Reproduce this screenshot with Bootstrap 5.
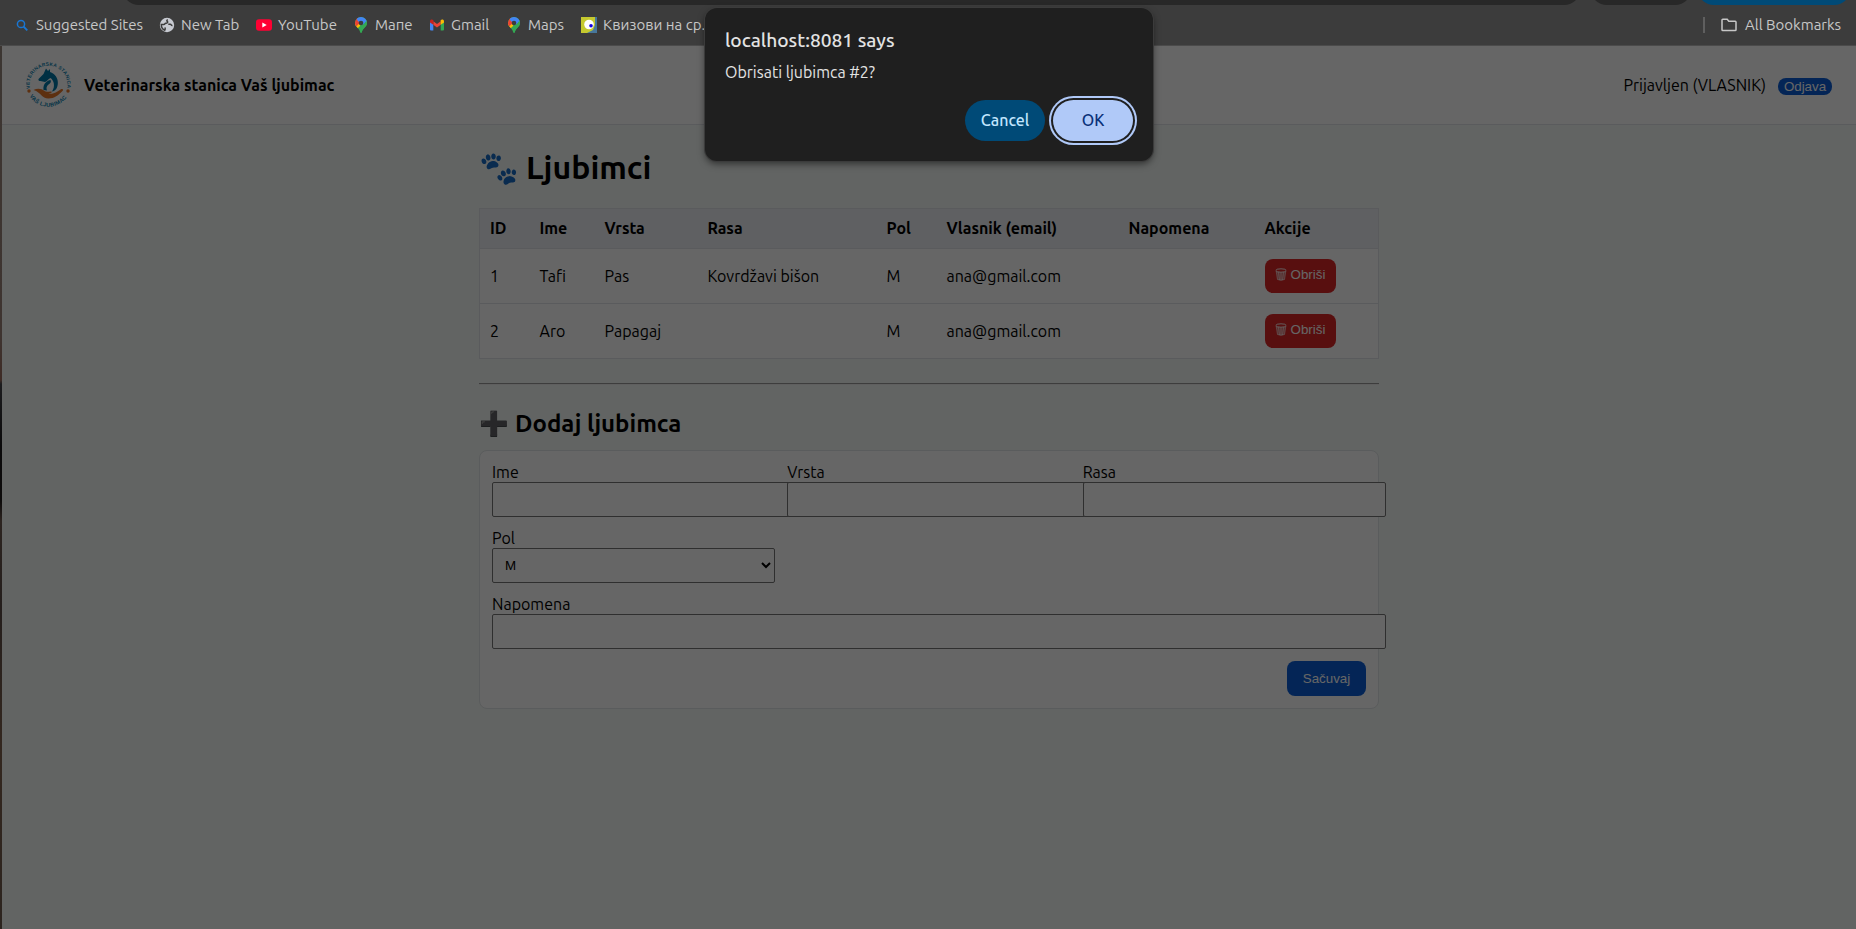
<!DOCTYPE html>
<html lang="sr">
<head>
<meta charset="utf-8">
<title>Veterinarska stanica Vaš ljubimac</title>
<link href="https://cdn.jsdelivr.net/npm/bootstrap@5.3.0/dist/css/bootstrap.min.css" rel="stylesheet">
<script src="https://cdn.jsdelivr.net/npm/bootstrap@5.3.0/dist/js/bootstrap.bundle.min.js"></script>
<style>
body{font-family:Ubuntu,"Noto Sans",sans-serif;font-size:16px;color:#000;height:929px;overflow:hidden;background:#3c3c3c}
.toolbar-strip{height:5px;background:#3c3c3c;padding-left:122px}
.pill{height:34px;border-radius:17px;background:#282828}
.pill-url{width:1459px;margin-right:9px}
.pill-ext{width:102px;margin-right:5px}
.pill-user{width:154px;background:#004a77}
.bookmarks{height:41px;background:#3c3c3c;border-bottom:1px solid #4b4b4b;padding:0 15px 0 14px;font-size:15px;color:#c7c7c7;line-height:40px}
.bookmarks svg{width:16px;height:16px;flex:none;margin-right:6px}
.bm-sep{width:2px;height:16px;background:#5f5f5f;margin-right:16px}
.desk-edge{width:2px;background:linear-gradient(#3c3632 0,#3e3430 290px,#3e2b25 334px,#1c1c1e 338px,#0b0a0b 400px,#0d0b0b 455px,#2c2420 475px,#241e1c 560px,#33271f 700px,#2c241f 100%)}
.site{background:#f5faf7}
.shade{background:rgba(0,0,0,.6)}
.site-head{height:79px;background:#fff;border-bottom:1px solid #e1e4e8;padding:0 24px}
.brand-name{font-weight:700;margin-left:12px}
.user-info{margin-right:12px}
.btn-logout{font:13.33px/17px "Liberation Sans",sans-serif;width:54px;height:17px;background:#0b5ed7;color:#fff;border:0;border-radius:8px;padding:0;margin-top:2px}
.wrap{width:900px;margin-left:477px;padding-top:18px}
.wrap h1{font-size:32px;line-height:48px;font-weight:700;margin:0 0 17px}
.wrap h2{font-size:24px;line-height:38px;font-weight:700;margin:0 0 7px}
.emo{line-height:1;flex:none}
.emo1{font-size:32px;width:47px}
.emo2{font-size:24px;width:36px}
.pets{width:900px;table-layout:fixed;border-collapse:collapse;background:#fff;border:1px solid #e1e4e8}
.pets th{background:#eef1f6;font-weight:700;height:40px;padding:0 10px 2px;border-bottom:1px solid #e1e4e8}
.pets td{height:55px;padding:0 10px;border-bottom:1px solid #e1e4e8}
.pets th,.pets td{white-space:nowrap}
.btn-del{font:13.33px/15px "Liberation Sans",sans-serif;width:71px;height:34px;background:#dc2626;color:#fff;border:0;border-radius:8px;padding:0 0 3px;display:flex;align-items:center;justify-content:center}
.btn-del svg{width:12px;height:13px;margin-right:4px;margin-bottom:1px}
.rule{height:2px;border-top:1px solid #9a9a9a;border-bottom:1px solid #eee;margin:24px 0 20px}
.form-box{background:#fff;border:1px solid #e1e5e8;border-radius:8px;padding:12px;height:259px;display:grid;grid-template-columns:repeat(3,1fr);column-gap:12px;row-gap:12px;grid-auto-rows:54px}
.form-box label{display:block;line-height:18px;height:19px;white-space:nowrap}
.form-box input{display:block;width:calc(100% + 20px);height:35px;background:#fff;border:1px solid #767676;border-radius:2px;padding:0 10px}
.form-box select{display:block;width:100%;height:35px;background:#fff;border:1px solid #767676;border-radius:2px;padding:0 8px;font:13.33px "Liberation Sans",sans-serif;color:#000}
.span-all{grid-column:1/-1}
.btn-save{font:13.33px "Liberation Sans",sans-serif;width:79px;height:35px;background:#0b5ed7;color:#fff;border:0;border-radius:8px;padding:0}
.dialog-box{left:705px;top:8px;width:448px;height:153px;background:#1f1f1f;border-radius:12px;box-shadow:0 0 0 1px #3b3b3b,0 3px 7px rgba(0,0,0,.5);padding:19px 20px 20px;color:#e3e3e3;z-index:5}
.dlg-title{font-size:19.2px;line-height:26px;font-weight:500;margin-bottom:5px}
.dlg-text{line-height:28px}
.dlg-btns{margin-top:14px;gap:8px}
.dlg-btns button{width:80px;height:41px;border:0;border-radius:21px;font-weight:500;padding:0 0 2px}
.b-cancel{background:#004a77;color:#c2e7ff}
.b-ok{background:#b0c9f8;color:#0a3078;box-shadow:0 0 0 2px #1f1f1f,0 0 0 4px #b0c9f8}
</style>
</head>
<body class="d-flex flex-column position-relative">
<div class="toolbar-strip d-flex align-items-end overflow-hidden"><div class="pill pill-url"></div><div class="pill pill-ext"></div><div class="pill pill-user"></div></div>

<svg width="0" height="0" class="position-absolute"><defs>
<clipPath id="pinc"><path d="M8 0a6 6 0 0 0-6 6c0 4 4.300 5 5.200 9.200.2 1 1.400 1 1.600 0C9.700 11 14 10 14 6a6 6 0 0 0-6-6z"/></clipPath>
<symbol id="pin" viewBox="0 0 16 16"><g clip-path="url(#pinc)"><path fill="#34a853" d="M0 0h16v16H0z"/><path fill="#fbbc04" d="M0 5h8l-1 4-4 4-3-3z"/><path fill="#ea4335" d="M0 0h5l3 5-5 4.500L0 8z"/><path fill="#4285f4" d="M4 0h12v4L9 8 4 3z"/><path fill="#34a853" d="m14 3-7 9 1 4 8-6z"/></g><circle cx="8" cy="6" r="2.300" fill="#3c3c3c"/></symbol>
<symbol id="bin" viewBox="0 0 12 13"><path fill="#ddd" fill-opacity=".4" d="m1.400 3 1.200 8.500q3.400 1.500 6.800 0L10.600 3q-4.600 1.800-9.200 0z"/><path d="m1.200 3 1.300 8.500q3.500 1.400 7 0L10.800 3M3.500 4.200l1 8M6 4.500v8M8.500 4.200l-1 8" fill="none" stroke="#fff" stroke-width=".6"/><ellipse cx="6" cy="2.500" rx="5.200" ry="1.700" fill="#dc2626" stroke="#fff" stroke-width=".9"/></symbol>
</defs></svg>

<nav class="bookmarks d-flex align-items-center text-nowrap">
<div class="d-flex align-items-center" style="width:145px"><svg viewBox="0 0 16 16"><circle cx="7" cy="7" r="3.600" fill="none" stroke="#1976d2" stroke-width="1.500"/><path d="m9.500 9.500 3.800 3.800" stroke="#1976d2" stroke-width="1.800"/></svg>Suggested Sites</div>
<div class="d-flex align-items-center" style="width:97px"><svg viewBox="0 0 16 16"><circle cx="8" cy="8" r="7.200" fill="#c7cad1"/><path d="M8.800 2.600c-1.300.8-1.200 1.300-.4 2 .9.900-.5 1.700-1.600 1.600-1.300 0-.6 1.300-2 1.300H2.300c0 2.900 1.300 4.900 3.500 5.700.8-1.200-.2-1.900.7-2.700M9.300 7.300h1.900c1.300 0 .7 1.500 2.300 1.300" fill="none" stroke="#3c3c3c" stroke-width="1.500"/></svg>New Tab</div>
<div class="d-flex align-items-center" style="width:97px"><svg viewBox="0 0 16 16"><rect y="2.300" width="16" height="11.400" rx="3" fill="#ff0033"/><path d="M6.300 5.500v5L10.700 8z" fill="#fff"/></svg>YouTube</div>
<div class="d-flex align-items-center" style="width:76px"><svg><use href="#pin"/></svg>Мапе</div>
<div class="d-flex align-items-center" style="width:77px"><svg viewBox="0 0 16 16"><path fill="#4285f4" d="M1 4.500 4.300 7v6.500H2a1 1 0 0 1-1-1z"/><path fill="#34a853" d="M15 4.500 11.700 7v6.500H14a1 1 0 0 0 1-1z"/><path fill="#ea4335" d="M4.300 4.200 8 7l3.700-2.800v3.600L8 10.600 4.300 7.800z"/><path fill="#c5221f" d="M1 4.300c0-1.800 2-2.300 3.300-1.200v4.700L1 5.400z"/><path fill="#fbbc04" d="M15 4.300c0-1.800-2-2.300-3.300-1.200v4.700L15 5.400z"/></svg>Gmail</div>
<div class="d-flex align-items-center" style="width:75px"><svg><use href="#pin"/></svg>Maps</div>
<div class="d-flex align-items-center"><svg viewBox="0 0 16 16"><path fill="#c5c92f" d="M0 0h16v16H0z"/><path fill="#47779b" d="M14 0h2v16H6l6-3 2-5z"/><circle cx="8" cy="7.500" r="4.800" fill="#fff"/><circle cx="10" cy="8.700" r="1.800" fill="#1100e0"/></svg>Квизови на ср.</div>
<div class="bm-sep ms-auto"></div>
<div class="d-flex align-items-center" style="width:120px"><svg viewBox="0 0 16 16" style="margin-right:8px"><path d="M1 12.700V3q0-.8.800-.8h4.400l1.600 2h6.400q.8 0 .8.800v7.700q0 .8-.8.800H1.800q-.8 0-.8-.8z" fill="none" stroke="#c7c7c7" stroke-width="1.500"/></svg>All Bookmarks</div>
</nav>

<div class="d-flex flex-grow-1">
<div class="desk-edge"></div>
<div class="site flex-grow-1 position-relative">
<header class="site-head d-flex align-items-center">
<svg width="46" height="46" viewBox="-22.500 -22.500 46 46"><defs><path id="arcTop" d="M-18.500 4A18.900 18.900 0 1 1 18.500 4"/><path id="arcBot" d="M-20 9.800A22.300 22.300 0 0 0 20 9.800"/></defs>
<g font-family="Liberation Sans,sans-serif" font-weight="700" fill="#0b7fb0"><text font-size="4.800" textLength="66" lengthAdjust="spacing"><textPath href="#arcTop">VETERINARSKA STANICA</textPath></text><text font-size="5.500" textLength="44"><textPath href="#arcBot" startOffset="2">VAŠ LJUBIMAC</textPath></text></g>
<path fill="#0078a8" d="M-2.500-16-.5-13.500 1.500-15.500v3C6.500-11 10-6 9.300-.5 8.800 4 7 6.500 3.500 7 7 2 5.500-4 2-6.500-1-5-1-3.500-3.500-2.500L-8-3.500q-2.500 0-2-2l5-5z"/><path fill="#0078a8" d="M-5 5.500C-6-1-1-4 2-4.500 3-3 2-1 0 0-2 1.500-2.500 3.500-1.500 6z"/><path fill="#e8782a" d="M-15 5.500c4-2 8-1.500 11 1 2 1.500 5 0 7 .5 1 1-1 2-3 2.500 5 .5 9-2.500 12-4.500 2-1 3.500 0 2 1.500C10 10.500 6 14 0 14-7 14-7 8-15 5.500z"/><circle cx="-19.500" cy="6.500" r="1.700" fill="#e8782a"/><circle cx="19.500" cy="6.500" r="1.700" fill="#e8782a"/></svg>
<span class="brand-name">Veterinarska stanica Vaš ljubimac</span>
<span class="user-info ms-auto">Prijavljen (VLASNIK)</span><button class="btn-logout">Odjava</button>
</header>
<main class="wrap">
<h1 class="d-flex align-items-center"><span class="emo emo1">🐾</span>Ljubimci</h1>
<table class="pets">
<colgroup><col style="width:50px"><col style="width:65px"><col style="width:103px"><col style="width:179px"><col style="width:60px"><col style="width:182px"><col style="width:136px"><col></colgroup>
<thead><tr><th>ID</th><th>Ime</th><th>Vrsta</th><th>Rasa</th><th>Pol</th><th>Vlasnik (email)</th><th>Napomena</th><th>Akcije</th></tr></thead>
<tbody>
<tr><td>1</td><td>Tafi</td><td>Pas</td><td>Kovrdžavi bišon</td><td>M</td><td>ana@gmail.com</td><td></td><td><button class="btn-del"><svg><use href="#bin"/></svg>Obriši</button></td></tr>
<tr><td>2</td><td>Aro</td><td>Papagaj</td><td></td><td>M</td><td>ana@gmail.com</td><td></td><td><button class="btn-del"><svg><use href="#bin"/></svg>Obriši</button></td></tr>
</tbody></table>
<div class="rule"></div>
<h2 class="d-flex align-items-center"><span class="emo emo2">➕</span>Dodaj ljubimca</h2>
<form class="form-box">
<div><label>Ime</label><input type="text"></div>
<div><label>Vrsta</label><input type="text"></div>
<div><label>Rasa</label><input type="text"></div>
<div><label>Pol</label><select><option>M</option></select></div>
<div class="span-all"><label>Napomena</label><input type="text"></div>
<div class="span-all text-end"><button type="button" class="btn-save">Sačuvaj</button></div>
</form>
</main>
<div class="shade position-absolute top-0 start-0 w-100 h-100"></div>
</div>
</div>

<div class="dialog-box position-absolute" role="dialog">
<div class="dlg-title">localhost:8081 says</div>
<div class="dlg-text">Obrisati ljubimca #2?</div>
<div class="dlg-btns d-flex justify-content-end"><button class="b-cancel">Cancel</button><button class="b-ok">OK</button></div>
</div>
</body>
</html>
